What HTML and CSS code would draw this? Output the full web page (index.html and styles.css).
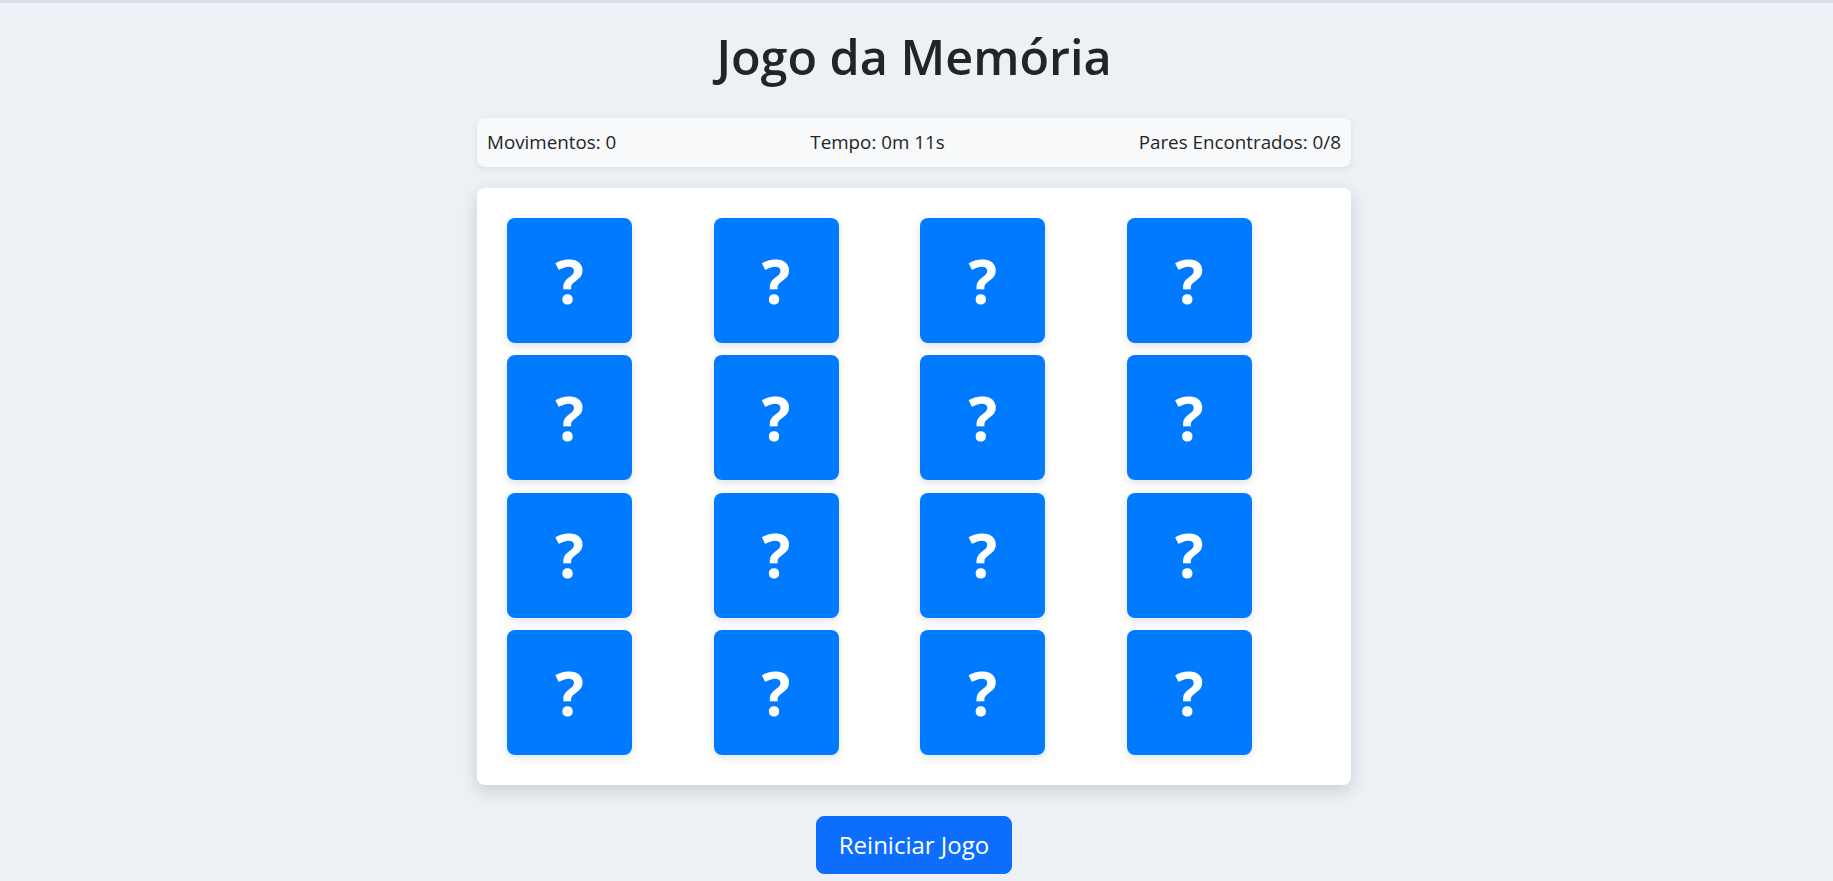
FILE: index.html
```html
<!DOCTYPE html>
<html lang="pt-BR">
<head>
<meta charset="utf-8">
<title>Jogo da Memória</title>
<link rel="stylesheet" href="styles.css">
</head>
<body>
<main class="page">
  <h1 class="title">Jogo da Memória</h1>
  <div class="stats">
    <span class="stat">Movimentos: 0</span>
    <span class="stat">Tempo: 0m 11s</span>
    <span class="stat">Pares Encontrados: 0/8</span>
  </div>
  <div class="board">
    <div class="card">?</div>
    <div class="card">?</div>
    <div class="card">?</div>
    <div class="card">?</div>
    <div class="card">?</div>
    <div class="card">?</div>
    <div class="card">?</div>
    <div class="card">?</div>
    <div class="card">?</div>
    <div class="card">?</div>
    <div class="card">?</div>
    <div class="card">?</div>
    <div class="card">?</div>
    <div class="card">?</div>
    <div class="card">?</div>
    <div class="card">?</div>
  </div>
  <div class="actions">
    <button class="btn-restart" type="button">Reiniciar Jogo</button>
  </div>
</main>
</body>
</html>
```

FILE: styles.css
```css
html, body {
  margin: 0;
  padding: 0;
}

body {
  background: #edf1f6;
  border-top: 3px solid #d6e0ea;
  padding-right: 5px;
  font-family: "Open Sans", "Noto Sans", sans-serif;
  color: #212529;
  min-height: 878px;
  overflow: hidden;
}

.page {
  width: 874px;
  margin: 0 auto;
  padding-top: 25px;
  display: flex;
  flex-direction: column;
  align-items: stretch;
}

.title {
  margin: 0 0 33px;
  font-size: 48.5px;
  font-weight: 600;
  line-height: 57px;
  text-align: center;
  color: #212529;
}

.stats {
  display: flex;
  justify-content: space-between;
  align-items: center;
  background: #f8f9fa;
  border-radius: 8px;
  padding: 10px;
  font-size: 18.8px;
  line-height: 29px;
  box-shadow: 0 2px 6px rgba(0, 0, 0, 0.08);
}

.board {
  margin-top: 21px;
  background: #ffffff;
  border-radius: 8px;
  padding: 30px;
  display: grid;
  grid-template-columns: repeat(4, 1fr);
  gap: 12.4px;
  box-shadow: 0 6px 18px rgba(0, 0, 0, 0.15);
}

.card {
  width: 125px;
  height: 125px;
  background: #007bff;
  border-radius: 8px;
  display: flex;
  align-items: center;
  justify-content: center;
  color: #ffffff;
  font-family: "Open Sans", sans-serif;
  font-size: 60px;
  font-weight: 700;
  line-height: 1;
  box-shadow: 0 3px 8px rgba(0, 0, 0, 0.12);
}

.actions {
  display: flex;
  justify-content: center;
  margin-top: 31px;
}

.btn-restart {
  background: #0d6efd;
  border: 1px solid #0d6efd;
  border-radius: 8px;
  color: #ffffff;
  font-family: "Open Sans", "Noto Sans", sans-serif;
  font-size: 24px;
  line-height: 36px;
  padding: 10px 22px;
  cursor: pointer;
}
```
